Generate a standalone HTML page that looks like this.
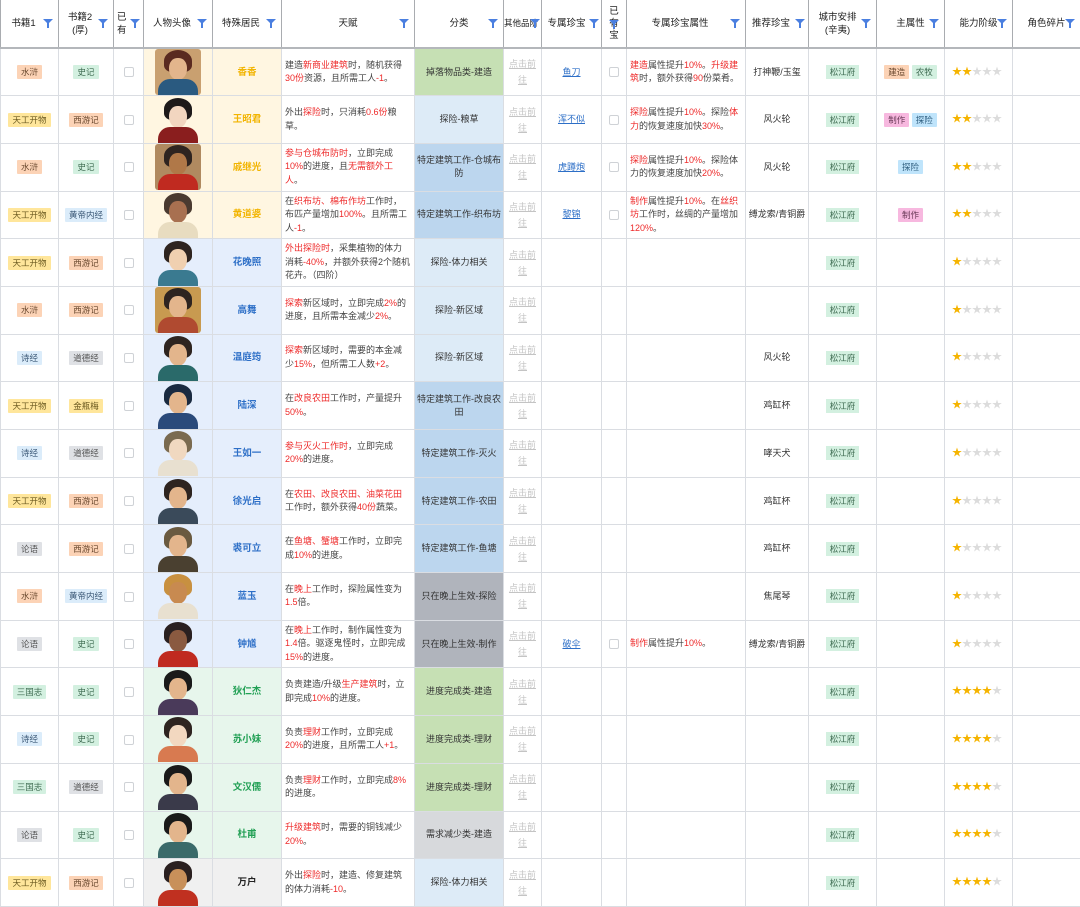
<!DOCTYPE html>
<html><head><meta charset="utf-8">
<style>
*{box-sizing:border-box;margin:0;padding:0}
body{width:1080px;height:907px;overflow:hidden;background:#fff;font-family:"Liberation Sans","Noto Sans CJK SC",sans-serif;color:#333;font-size:9px}
table{border-collapse:collapse;table-layout:fixed;width:1080px}
td,th{border:1px solid #dadde2;text-align:center;vertical-align:middle;overflow:hidden;line-height:13px}
th{height:48px;font-weight:normal;font-size:9.5px;color:#222;position:relative;border-left:1px solid #a9acb0;border-right:1px solid #a9acb0;border-bottom:2px solid #b4b7bb;border-top:none}
tr.r td{height:47.7px}
.f{position:absolute;right:5px;top:19px;width:0;height:0;border-left:5px solid transparent;border-right:5px solid transparent;border-top:5px solid #4a7fe0}
.f:after{content:"";position:absolute;left:-1px;top:-1px;width:2px;height:5px;background:#4a7fe0}
.tg{display:inline-block;padding:1px 4px;font-size:8.5px;line-height:12px;border-radius:1px;vertical-align:middle}
.o{background:#fcd3b6;color:#6b4a30}.y{background:#ffe69b;color:#6b5a20}.g{background:#d3f0e0;color:#3d6a50}
.lb{background:#dbecfa;color:#3d5a78}.gy{background:#dfe1e5;color:#555}.pk{background:#f7b8df;color:#6a3a58}.bl{background:#bfe4fb;color:#2f5f80}
.cb{display:inline-block;width:10px;height:10px;border:1px solid #cfd2d6;border-radius:2px;background:#fff;vertical-align:middle}
.Y{background:#fff6e1}.Y b{color:#f2b400}
.B{background:#e5eefc}.B b{color:#2d6fc7}
.G{background:#e7f6ec}.G b{color:#22a055}
.N{background:#f0f0f0}.N b{color:#222}
b{font-weight:bold;font-size:9.5px}
.t{text-align:left;padding:0 3px;font-size:9px;line-height:13.5px;color:#444}
.r2{color:#ee2a2a}
.cg{background:#c6e0b4}.cl{background:#ddebf7}.cm{background:#bcd6ee}.cy{background:#b0b4bc}.cz{background:#d7d9dc}
.c{font-size:9px;color:#333}
.lk{color:#c4c4c4;font-size:9px;text-decoration:underline;display:inline-block;width:28px;line-height:16px}
.ln{color:#2d6fc7;text-decoration:underline;font-size:9px}
.pt{position:relative;width:46px;height:46px;margin:0 auto;overflow:hidden;border-radius:3px}
.pt i{position:absolute;display:block}
.pt .h{left:9px;top:1px;width:28px;height:22px;background:#2e2420;border-radius:50% 50% 30% 30%}
.pt .fc{left:14px;top:9px;width:18px;height:22px;background:#e3b58c;border-radius:45% 45% 50% 50%}
.pt .bd{left:3px;top:30px;width:40px;height:18px;border-radius:12px 12px 0 0}
td.st{color:#f5b400;font-size:10px;text-align:left;padding-left:7px}.st s{color:#dcdcdc;text-decoration:none}
.ct{display:inline-block;background:#d3f0e0;color:#3d6a50;font-size:8.5px;padding:1px 4px;line-height:12px}
</style></head><body>
<table>
<colgroup><col style="width:58px"><col style="width:55px"><col style="width:30px"><col style="width:69px"><col style="width:69px"><col style="width:133px"><col style="width:89px"><col style="width:38px"><col style="width:60px"><col style="width:25px"><col style="width:119px"><col style="width:63px"><col style="width:68px"><col style="width:68px"><col style="width:68px"><col style="width:68px"></colgroup>
<tr>
<th style="padding-right:12px">书籍1<i class="f"></i></th>
<th style="padding-right:12px">书籍2<br>(厚)<i class="f"></i></th>
<th style="text-align:left;padding-left:3px">已<br>有<i class="f" style="right:3px"></i></th>
<th style="padding-right:12px">人物头像<i class="f"></i></th>
<th style="padding-right:12px">特殊居民<i class="f"></i></th>
<th>天赋<i class="f"></i></th>
<th>分类<i class="f"></i></th>
<th style="font-size:8.5px;padding-right:8px;white-space:nowrap">其他品阶<i class="f" style="right:1px"></i></th>
<th style="padding-right:10px">专属珍宝<i class="f" style="right:2px"></i></th>
<th style="line-height:12px">已<br>有<br>宝<i class="f" style="right:7px;top:20px"></i></th>
<th style="padding-right:12px">专属珍宝属性<i class="f"></i></th>
<th style="padding-right:12px">推荐珍宝<i class="f" style="right:3px"></i></th>
<th style="padding-right:10px">城市安排<br>(辛夷)<i class="f"></i></th>
<th>主属性<i class="f"></i></th>
<th>能力阶级<i class="f"></i></th>
<th>角色碎片<i class="f"></i></th>
</tr>

<tr class="r"><td><span class="tg o">水浒</span></td><td><span class="tg g">史记</span></td><td><span class="cb"></span></td>
<td class="Y"><div class="pt" style="background:#c9a070"><i class="h" style="background:#5a2a20"></i><i class="fc"></i><i class="bd" style="background:#2a5a80"></i></div></td>
<td class="Y"><b>香香</b></td>
<td class="t">建造<span class="r2">新商业建筑</span>时，随机获得<span class="r2">30份</span>资源，且所需工人<span class="r2">-1</span>。</td>
<td class="c cg">掉落物品类-建造</td><td><span class="lk">点击前往</span></td><td><span class="ln">鱼刀</span></td><td><span class="cb"></span></td>
<td class="t"><span class="r2">建造</span>属性提升<span class="r2">10%</span>。<span class="r2">升级建筑</span>时，额外获得<span class="r2">90</span>份菜肴。</td>
<td class="c">打神鞭/玉玺</td><td><span class="ct">松江府</span></td><td><span class="tg o">建造</span> <span class="tg g">农牧</span></td><td class="st">★★<s>★★★</s></td><td></td></tr>

<tr class="r"><td><span class="tg y">天工开物</span></td><td><span class="tg o">西游记</span></td><td><span class="cb"></span></td>
<td class="Y"><div class="pt"><i class="h" style="background:#1e1a1a"></i><i class="fc" style="background:#f2d6c0"></i><i class="bd" style="background:#8a1e1e"></i></div></td>
<td class="Y"><b>王昭君</b></td>
<td class="t">外出<span class="r2">探险</span>时，只消耗<span class="r2">0.6份</span>粮草。</td>
<td class="c cl">探险-粮草</td><td><span class="lk">点击前往</span></td><td><span class="ln">浑不似</span></td><td><span class="cb"></span></td>
<td class="t"><span class="r2">探险</span>属性提升<span class="r2">10%</span>。探险<span class="r2">体力</span>的恢复速度加快<span class="r2">30%</span>。</td>
<td class="c">风火轮</td><td><span class="ct">松江府</span></td><td><span class="tg pk">制作</span> <span class="tg bl">探险</span></td><td class="st">★★<s>★★★</s></td><td></td></tr>

<tr class="r"><td><span class="tg o">水浒</span></td><td><span class="tg g">史记</span></td><td><span class="cb"></span></td>
<td class="Y"><div class="pt" style="background:#b08a60"><i class="h"></i><i class="fc" style="background:#b07848"></i><i class="bd" style="background:#c02a20"></i></div></td>
<td class="Y"><b>戚继光</b></td>
<td class="t"><span class="r2">参与仓城布防时</span>，立即完成<span class="r2">10%</span>的进度，且<span class="r2">无需额外工人</span>。</td>
<td class="c cm">特定建筑工作-仓城布防</td><td><span class="lk">点击前往</span></td><td><span class="ln">虎蹲炮</span></td><td><span class="cb"></span></td>
<td class="t"><span class="r2">探险</span>属性提升<span class="r2">10%</span>。探险体力的恢复速度加快<span class="r2">20%</span>。</td>
<td class="c">风火轮</td><td><span class="ct">松江府</span></td><td><span class="tg bl">探险</span></td><td class="st">★★<s>★★★</s></td><td></td></tr>

<tr class="r"><td><span class="tg y">天工开物</span></td><td><span class="tg lb">黄帝内经</span></td><td><span class="cb"></span></td>
<td class="Y"><div class="pt"><i class="h" style="background:#4a3a30"></i><i class="fc" style="background:#a87050"></i><i class="bd" style="background:#e8dcc0"></i></div></td>
<td class="Y"><b>黄道婆</b></td>
<td class="t">在<span class="r2">织布坊、棉布作坊</span>工作时，布匹产量增加<span class="r2">100%</span>。且所需工人<span class="r2">-1</span>。</td>
<td class="c cm">特定建筑工作-织布坊</td><td><span class="lk">点击前往</span></td><td><span class="ln">黎锦</span></td><td><span class="cb"></span></td>
<td class="t"><span class="r2">制作</span>属性提升<span class="r2">10%</span>。在<span class="r2">丝织坊</span>工作时，丝绸的产量增加<span class="r2">120%</span>。</td>
<td class="c">缚龙索/青铜爵</td><td><span class="ct">松江府</span></td><td><span class="tg pk">制作</span></td><td class="st">★★<s>★★★</s></td><td></td></tr>

<tr class="r"><td><span class="tg y">天工开物</span></td><td><span class="tg o">西游记</span></td><td><span class="cb"></span></td>
<td class="B"><div class="pt"><i class="h"></i><i class="fc" style="background:#f0d0b0"></i><i class="bd" style="background:#3a7a90"></i></div></td>
<td class="B"><b>花晚照</b></td>
<td class="t"><span class="r2">外出探险时</span>，采集植物的体力消耗<span class="r2">-40%</span>，并额外获得2个随机花卉。（四阶）</td>
<td class="c cl">探险-体力相关</td><td><span class="lk">点击前往</span></td><td></td><td></td><td></td><td></td><td><span class="ct">松江府</span></td><td></td><td class="st">★<s>★★★★</s></td><td></td></tr>

<tr class="r"><td><span class="tg o">水浒</span></td><td><span class="tg o">西游记</span></td><td><span class="cb"></span></td>
<td class="B"><div class="pt" style="background:#c89a50"><i class="h"></i><i class="fc"></i><i class="bd" style="background:#b04a30"></i></div></td>
<td class="B"><b>高舞</b></td>
<td class="t"><span class="r2">探索</span>新区域时，立即完成<span class="r2">2%</span>的进度，且所需本金减少<span class="r2">2%</span>。</td>
<td class="c cl">探险-新区域</td><td><span class="lk">点击前往</span></td><td></td><td></td><td></td><td></td><td><span class="ct">松江府</span></td><td></td><td class="st">★<s>★★★★</s></td><td></td></tr>

<tr class="r"><td><span class="tg lb">诗经</span></td><td><span class="tg gy">道德经</span></td><td><span class="cb"></span></td>
<td class="B"><div class="pt"><i class="h"></i><i class="fc"></i><i class="bd" style="background:#2a6a6a"></i></div></td>
<td class="B"><b>温庭筠</b></td>
<td class="t"><span class="r2">探索</span>新区域时，需要的本金减少<span class="r2">15%</span>，但所需工人数<span class="r2">+2</span>。</td>
<td class="c cl">探险-新区域</td><td><span class="lk">点击前往</span></td><td></td><td></td><td></td><td class="c">风火轮</td><td><span class="ct">松江府</span></td><td></td><td class="st">★<s>★★★★</s></td><td></td></tr>

<tr class="r"><td><span class="tg y">天工开物</span></td><td><span class="tg y">金瓶梅</span></td><td><span class="cb"></span></td>
<td class="B"><div class="pt"><i class="h" style="background:#1a2a40"></i><i class="fc"></i><i class="bd" style="background:#2a4a7a"></i></div></td>
<td class="B"><b>陆深</b></td>
<td class="t">在<span class="r2">改良农田</span>工作时，产量提升<span class="r2">50%</span>。</td>
<td class="c cm">特定建筑工作-改良农田</td><td><span class="lk">点击前往</span></td><td></td><td></td><td></td><td class="c">鸡缸杯</td><td><span class="ct">松江府</span></td><td></td><td class="st">★<s>★★★★</s></td><td></td></tr>

<tr class="r"><td><span class="tg lb">诗经</span></td><td><span class="tg gy">道德经</span></td><td><span class="cb"></span></td>
<td class="B"><div class="pt"><i class="h" style="background:#7a6a50"></i><i class="fc" style="background:#f0d8c0"></i><i class="bd" style="background:#e8e0d0"></i></div></td>
<td class="B"><b>王如一</b></td>
<td class="t"><span class="r2">参与灭火工作时</span>，立即完成<span class="r2">20%</span>的进度。</td>
<td class="c cm">特定建筑工作-灭火</td><td><span class="lk">点击前往</span></td><td></td><td></td><td></td><td class="c">哮天犬</td><td><span class="ct">松江府</span></td><td></td><td class="st">★<s>★★★★</s></td><td></td></tr>

<tr class="r"><td><span class="tg y">天工开物</span></td><td><span class="tg o">西游记</span></td><td><span class="cb"></span></td>
<td class="B"><div class="pt"><i class="h"></i><i class="fc"></i><i class="bd" style="background:#3a4a5a"></i></div></td>
<td class="B"><b>徐光启</b></td>
<td class="t">在<span class="r2">农田、改良农田、油菜花田</span>工作时，额外获得<span class="r2">40份</span>蔬菜。</td>
<td class="c cm">特定建筑工作-农田</td><td><span class="lk">点击前往</span></td><td></td><td></td><td></td><td class="c">鸡缸杯</td><td><span class="ct">松江府</span></td><td></td><td class="st">★<s>★★★★</s></td><td></td></tr>

<tr class="r"><td><span class="tg gy">论语</span></td><td><span class="tg o">西游记</span></td><td><span class="cb"></span></td>
<td class="B"><div class="pt"><i class="h" style="background:#6a5a40"></i><i class="fc"></i><i class="bd" style="background:#4a4030"></i></div></td>
<td class="B"><b>裘可立</b></td>
<td class="t">在<span class="r2">鱼塘、蟹塘</span>工作时，立即完成<span class="r2">10%</span>的进度。</td>
<td class="c cm">特定建筑工作-鱼塘</td><td><span class="lk">点击前往</span></td><td></td><td></td><td></td><td class="c">鸡缸杯</td><td><span class="ct">松江府</span></td><td></td><td class="st">★<s>★★★★</s></td><td></td></tr>

<tr class="r"><td><span class="tg o">水浒</span></td><td><span class="tg lb">黄帝内经</span></td><td><span class="cb"></span></td>
<td class="B"><div class="pt"><i class="h" style="background:#c89040"></i><i class="fc" style="background:#c88a50"></i><i class="bd" style="background:#e8e0d0"></i></div></td>
<td class="B"><b>蓝玉</b></td>
<td class="t">在<span class="r2">晚上</span>工作时，探险属性变为<span class="r2">1.5</span>倍。</td>
<td class="c cy">只在晚上生效-探险</td><td><span class="lk">点击前往</span></td><td></td><td></td><td></td><td class="c">焦尾琴</td><td><span class="ct">松江府</span></td><td></td><td class="st">★<s>★★★★</s></td><td></td></tr>

<tr class="r"><td><span class="tg gy">论语</span></td><td><span class="tg g">史记</span></td><td><span class="cb"></span></td>
<td class="B"><div class="pt"><i class="h" style="background:#2a2020"></i><i class="fc" style="background:#8a5a40"></i><i class="bd" style="background:#c02a20"></i></div></td>
<td class="B"><b>钟馗</b></td>
<td class="t">在<span class="r2">晚上</span>工作时，制作属性变为<span class="r2">1.4</span>倍。驱逐鬼怪时，立即完成<span class="r2">15%</span>的进度。</td>
<td class="c cy">只在晚上生效-制作</td><td><span class="lk">点击前往</span></td><td><span class="ln">破伞</span></td><td><span class="cb"></span></td>
<td class="t"><span class="r2">制作</span>属性提升<span class="r2">10%</span>。</td>
<td class="c">缚龙索/青铜爵</td><td><span class="ct">松江府</span></td><td></td><td class="st">★<s>★★★★</s></td><td></td></tr>

<tr class="r"><td><span class="tg g">三国志</span></td><td><span class="tg g">史记</span></td><td><span class="cb"></span></td>
<td class="G"><div class="pt"><i class="h" style="background:#1a1a1a"></i><i class="fc"></i><i class="bd" style="background:#4a3a5a"></i></div></td>
<td class="G"><b>狄仁杰</b></td>
<td class="t">负责建造/升级<span class="r2">生产建筑</span>时，立即完成<span class="r2">10%</span>的进度。</td>
<td class="c cg">进度完成类-建造</td><td><span class="lk">点击前往</span></td><td></td><td></td><td></td><td></td><td><span class="ct">松江府</span></td><td></td><td class="st">★★★★<s>★</s></td><td></td></tr>

<tr class="r"><td><span class="tg lb">诗经</span></td><td><span class="tg g">史记</span></td><td><span class="cb"></span></td>
<td class="G"><div class="pt"><i class="h"></i><i class="fc" style="background:#f2d8c0"></i><i class="bd" style="background:#d87a50"></i></div></td>
<td class="G"><b>苏小妹</b></td>
<td class="t">负责<span class="r2">理财</span>工作时，立即完成<span class="r2">20%</span>的进度，且所需工人<span class="r2">+1</span>。</td>
<td class="c cg">进度完成类-理财</td><td><span class="lk">点击前往</span></td><td></td><td></td><td></td><td></td><td><span class="ct">松江府</span></td><td></td><td class="st">★★★★<s>★</s></td><td></td></tr>

<tr class="r"><td><span class="tg g">三国志</span></td><td><span class="tg gy">道德经</span></td><td><span class="cb"></span></td>
<td class="G"><div class="pt"><i class="h" style="background:#1a1a1a"></i><i class="fc"></i><i class="bd" style="background:#3a3a4a"></i></div></td>
<td class="G"><b>文汉儒</b></td>
<td class="t">负责<span class="r2">理财</span>工作时，立即完成<span class="r2">8%</span>的进度。</td>
<td class="c cg">进度完成类-理财</td><td><span class="lk">点击前往</span></td><td></td><td></td><td></td><td></td><td><span class="ct">松江府</span></td><td></td><td class="st">★★★★<s>★</s></td><td></td></tr>

<tr class="r"><td><span class="tg gy">论语</span></td><td><span class="tg g">史记</span></td><td><span class="cb"></span></td>
<td class="G"><div class="pt"><i class="h" style="background:#1a1a1a"></i><i class="fc"></i><i class="bd" style="background:#3a6a6a"></i></div></td>
<td class="G"><b>杜甫</b></td>
<td class="t"><span class="r2">升级建筑</span>时，需要的铜钱减少<span class="r2">20%</span>。</td>
<td class="c cz">需求减少类-建造</td><td><span class="lk">点击前往</span></td><td></td><td></td><td></td><td></td><td><span class="ct">松江府</span></td><td></td><td class="st">★★★★<s>★</s></td><td></td></tr>

<tr class="r"><td><span class="tg y">天工开物</span></td><td><span class="tg o">西游记</span></td><td><span class="cb"></span></td>
<td class="N"><div class="pt"><i class="h" style="background:#2a2020"></i><i class="fc" style="background:#c8905a"></i><i class="bd" style="background:#c03020"></i></div></td>
<td class="N"><b>万户</b></td>
<td class="t">外出<span class="r2">探险</span>时，建造、修复建筑的体力消耗<span class="r2">-10</span>。</td>
<td class="c cl">探险-体力相关</td><td><span class="lk">点击前往</span></td><td></td><td></td><td></td><td></td><td><span class="ct">松江府</span></td><td></td><td class="st">★★★★<s>★</s></td><td></td></tr>
</table>
</body></html>
